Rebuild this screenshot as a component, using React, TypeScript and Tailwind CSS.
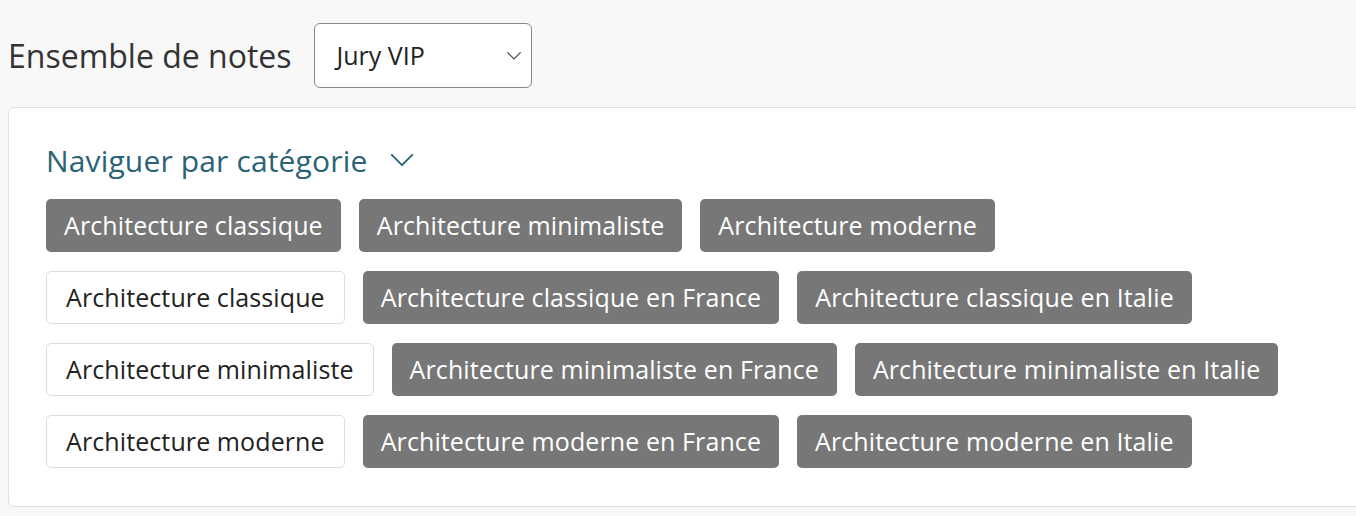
import React from 'react';

const rows: { label: string; active: boolean }[][] = [
    [
        { label: 'Architecture classique', active: true },
        { label: 'Architecture minimaliste', active: true },
        { label: 'Architecture moderne', active: true },
    ],
    [
        { label: 'Architecture classique', active: false },
        { label: 'Architecture classique en France', active: true },
        { label: 'Architecture classique en Italie', active: true },
    ],
    [
        { label: 'Architecture minimaliste', active: false },
        { label: 'Architecture minimaliste en France', active: true },
        { label: 'Architecture minimaliste en Italie', active: true },
    ],
    [
        { label: 'Architecture moderne', active: false },
        { label: 'Architecture moderne en France', active: true },
        { label: 'Architecture moderne en Italie', active: true },
    ],
];

const Chevron: React.FC<{ className?: string }> = ({ className }) => (
    <svg className={className} viewBox="0 0 24 14" fill="none" stroke="currentColor" strokeWidth={2} strokeLinecap="round" strokeLinejoin="round">
        <path d="M1 1l11 11L23 1" />
    </svg>
);

const Chip: React.FC<{ label: string; active: boolean }> = ({ label, active }) =>
    active ? (
        <span className="h-[53px] px-[18px] flex items-center rounded-[5px] bg-[#777777] text-white text-[25px] tracking-[0.1px] whitespace-nowrap">
            {label}
        </span>
    ) : (
        <span className="h-[53px] px-[19px] flex items-center rounded-[5px] bg-white border border-[#dddddd] text-[#222222] text-[25px] tracking-[0.1px] whitespace-nowrap">
            {label}
        </span>
    );

export default function App() {
    return (
        <div className="w-[1356px] h-[516px] overflow-hidden bg-[#f8f8f8] font-['Open_Sans',sans-serif]">
            <div className="pl-[8px] pt-[23px]">
                <div className="flex items-center h-[65px]">
                    <h1 className="text-[32px] text-[#333333] font-normal">Ensemble de notes</h1>
                    <div className="ml-[22px] w-[218px] h-[65px] flex items-center justify-between pl-[22px] pr-[10px] bg-white border border-[#888888] rounded-[6px]">
                        <span className="text-[25px] text-[#222222]">Jury VIP</span>
                        <Chevron className="w-[14px] h-[8px] text-[#444444]" />
                    </div>
                </div>
                <div className="mt-[19px] w-[1400px] h-[400px] bg-white border border-[#e0e0e0] rounded-[6px] pl-[37px] pt-[32px]">
                    <div className="flex items-center h-[40px]">
                        <span className="text-[30px] tracking-[0.15px] text-[#2a6376]">Naviguer par catégorie</span>
                        <Chevron className="ml-[23px] w-[24px] h-[13px] text-[#2a6376]" />
                    </div>
                    <div className="mt-[19px] flex flex-col gap-[19px]">
                        {rows.map((row, i) => (
                            <div key={i} className="flex gap-[18px]">
                                {row.map((c, j) => (
                                    <Chip key={j} label={c.label} active={c.active} />
                                ))}
                            </div>
                        ))}
                    </div>
                </div>
            </div>
        </div>
    );
}
